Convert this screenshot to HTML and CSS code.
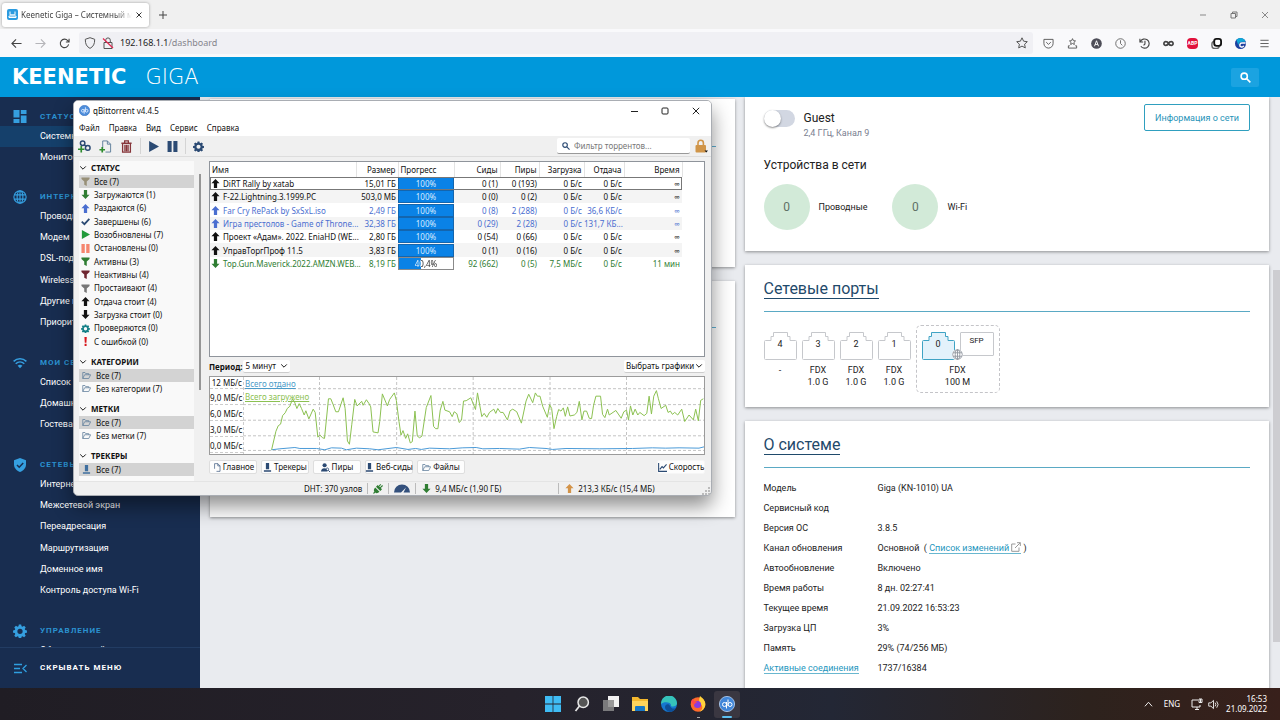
FILE: index.html
```html
<!DOCTYPE html>
<html lang="ru">
<head>
<meta charset="utf-8">
<title>Keenetic Giga – Системный монитор</title>
<link rel="stylesheet" href="styles.css">
</head>
<body>
<svg class="sprite" aria-hidden="true">
  <symbol id="up" viewBox="0 0 10 10"><path d="M5 0 9.500 4.800H6.800V10H3.200V4.800H.5z"/></symbol>
  <symbol id="down" viewBox="0 0 10 10"><path d="M5 10 .5 5.200h2.700V0h3.600v5.200h2.700z"/></symbol>
  <symbol id="funnel" viewBox="0 0 10 10"><path d="M.5.5h9v1.600L6.400 5v5L3.600 8.500V5L.5 2.100z"/></symbol>
  <symbol id="tick" viewBox="0 0 10 10"><path d="M.8 5.200 3.800 8 9.300 2" fill="none" stroke="currentColor" stroke-width="2"/></symbol>
  <symbol id="play" viewBox="0 0 10 10"><path d="M1 0l9 5-9 5z"/></symbol>
  <symbol id="pause" viewBox="0 0 10 10"><path d="M.5 0h3.700v10H.5zM5.800 0h3.700v10H5.800z"/></symbol>
  <symbol id="gear" viewBox="0 0 24 24"><path fill-rule="evenodd" d="M10 1h4l.6 3 1.700.8 2.700-1.700 2.800 2.800-1.700 2.700.8 1.800 3 .6v4l-3 .6-.8 1.700 1.700 2.700-2.800 2.800-2.700-1.700-1.700.8-.6 3h-4l-.6-3-1.700-.8-2.700 1.700-2.800-2.800 1.700-2.700-.8-1.700-3-.6v-4l3-.6.8-1.800L2.200 5.900 5 3.100l2.700 1.700L9.400 4zM12 8a4.500 4.500 0 1 0 0 9 4.500 4.500 0 0 0 0-9z"/></symbol>
  <symbol id="bang" viewBox="0 0 10 10"><path d="M3.800 0h2.600L6 6.500H4.200zM4 7.600h2.200V10H4z"/></symbol>
  <symbol id="folder" viewBox="0 0 12 10"><path d="M1 9V1h3l1 1.500h4V4M1 9l2.500-5H11.500L9 9z" fill="none" stroke="currentColor"/></symbol>
  <symbol id="tracker" viewBox="0 0 10 10"><path d="M3.200 0h3.600v7H3.200zM1 8h8v1.600H1z"/></symbol>
  <symbol id="chev" viewBox="0 0 10 10"><path d="M1.500 3 5 6.500 8.500 3" fill="none" stroke="currentColor" stroke-width="1.200"/></symbol>
  <symbol id="search" viewBox="0 0 12 12"><g fill="none" stroke="currentColor" stroke-width="1.700"><circle cx="4.600" cy="4.600" r="3.400"/><path d="M7.200 7.200 11.300 11.300"/></g></symbol>
  <symbol id="globe" viewBox="0 0 16 16"><g fill="none" stroke="currentColor" stroke-width="1.300"><circle cx="8" cy="8" r="7"/><ellipse cx="8" cy="8" rx="3.300" ry="7"/><path d="M1.500 5.500h13M1.500 10.500h13M8 1v14"/></g></symbol>
  <symbol id="page" viewBox="0 0 14 14"><path d="M4 9V1h5l3.500 3.500V13H7M9 1v3.500h3.500" fill="none" stroke="currentColor"/></symbol>
  <symbol id="port" viewBox="0 0 33 28"><path d="M1.500 8.500H7V4.500H9.500V.5H23.500V4.500H26V8.500H31.500Q32.500 8.500 32.500 9.500V26.500Q32.500 27.500 31.500 27.500H1.500Q.5 27.500.5 26.500V9.500Q.5 8.500 1.500 8.500z"/></symbol>
</svg>

<header class="tabs">
  <div class="tab">
    <svg class="i11" viewBox="0 0 11 11"><rect width="11" height="11" rx="2" fill="#2b9be0"/><path d="M3 2.500v3.300h5V2.500M2 7v1.500h7V7z" fill="none" stroke="#fff"/></svg>
    <span class="tab-title">Keenetic Giga – Системный монитор</span>
    <button class="plain" aria-label="Закрыть вкладку"><svg class="i8" viewBox="0 0 8 8"><path d="M1.500 1.500l5 5m0-5-5 5" stroke="#333"/></svg></button>
  </div>
  <button class="plain newtab" aria-label="Новая вкладка"><svg class="i8" viewBox="0 0 8 8"><path d="M4 0v8M0 4h8" stroke="#444"/></svg></button>
  <div class="winctl ff-ctl">
    <button class="plain" aria-label="Свернуть"><svg class="i8" viewBox="0 0 8 8"><path d="M1 4h6" stroke="#888"/></svg></button>
    <button class="plain" aria-label="Восстановить"><svg class="i8" viewBox="0 0 8 8"><path d="M1 2.500h4.500V7H1zM2.500 2.500V1H7v4.500H5.500" fill="none" stroke="#777"/></svg></button>
    <button class="plain" aria-label="Закрыть"><svg class="i8" viewBox="0 0 8 8"><path d="M1 1l6 6m0-6L1 7" stroke="#888"/></svg></button>
  </div>
</header>

<nav class="urlbar">
  <div class="navbtns">
    <button class="plain" aria-label="Назад"><svg class="i11" viewBox="0 0 12 12"><path d="M11.500 6H1.500M5.500 1.500 1 6l4.500 4.500" fill="none" stroke="#444" stroke-width="1.200"/></svg></button>
    <button class="plain" aria-label="Вперёд"><svg class="i11" viewBox="0 0 12 12"><path d="M.5 6h10M6.500 1.500 11 6l-4.500 4.500" fill="none" stroke="#b5b5b9" stroke-width="1.200"/></svg></button>
    <button class="plain" aria-label="Обновить"><svg class="i11" viewBox="0 0 12 12"><path d="M10.500 7a4.600 4.600 0 1 1-1-4.200L11 4.300M11 .8v3.500H7.500" fill="none" stroke="#444" stroke-width="1.200"/></svg></button>
  </div>
  <div class="address">
    <svg class="i12" viewBox="0 0 12 12"><path d="M6 .7 10.700 2.300C10.700 7 9.500 9.500 6 11.400 2.500 9.500 1.300 7 1.300 2.300z" fill="none" stroke="#555"/></svg>
    <svg class="i12" viewBox="0 0 12 12"><path d="M2 5.500h8v6H2zM3.700 5.500V3.200a2.300 2.300 0 0 1 4.600 0v2.300" fill="none" stroke="#555"/><path d="M1 1.500 11 11" stroke="#e22850" stroke-width="1.200"/></svg>
    <span class="url">192.168.1.1<span>/dashboard</span></span>
    <button class="plain" aria-label="Закладка"><svg class="i12" viewBox="0 0 12 12"><path d="M6 .8l1.600 3.400 3.700.5-2.700 2.500.7 3.700L6 9.100l-3.300 1.800.7-3.700L.7 4.700l3.700-.5z" fill="none" stroke="#555"/></svg></button>
  </div>
  <div class="exts">
    <svg class="i11" viewBox="0 0 12 12"><path d="M1 1.500h10V6a5 5 0 0 1-10 0zM3.500 4.500 6 7l2.500-2.500" fill="none" stroke="#555"/></svg>
    <svg class="i11" viewBox="0 0 12 12"><path d="M6 .7l1 2.200 2.300.3-1.700 1.600.4 2.300L6 6 4 7.100l.4-2.300-1.700-1.600L5 2.900zM3 8.500H1.500v2.500h9V8.500H9" fill="none" stroke="#555"/></svg>
    <svg class="i11" viewBox="0 0 12 12"><circle cx="6" cy="6" r="5.800" fill="#4d4d57"/><path d="M3.800 9 6 3l2.200 6M4.500 7h3" fill="none" stroke="#fff"/></svg>
    <svg class="i11" viewBox="0 0 12 12"><circle cx="6" cy="6" r="5.200" fill="none" stroke="#666"/><path d="M6 2.500V6l2 2" fill="none" stroke="#666"/></svg>
    <svg class="i11" viewBox="0 0 12 12"><path d="M1.500 4A5 5 0 1 1 2 9M1 .8V4.300h3.600M6.500 3v3.500L5 8" fill="none" stroke="#444" stroke-width="1.200"/></svg>
    <svg class="i11" viewBox="0 0 12 12"><path d="M6 6C4.700 3.500 1 3.300 1 6s3.700 2.500 5 0 5-2.700 5 0-3.700 2.500-5 0z" fill="none" stroke="#444" stroke-width="1.900"/></svg>
    <span class="abp">ABP</span>
    <svg class="i11" viewBox="0 0 12 12"><rect x="1" y="3.500" width="8" height="8" rx="3" fill="none" stroke="#666" stroke-width="1.500"/><rect x="3.500" y="1" width="7.500" height="7.500" rx="2.500" fill="#fff" stroke="#111" stroke-width="2"/></svg>
    <svg class="i11" viewBox="0 0 12 12"><circle cx="6" cy="6" r="6" fill="#1d3f9e"/><path d="M6 0a6 6 0 0 0-4.500 2L4 9C3 6 5 4 8 4h3.500A6 6 0 0 0 6 0z" fill="#0fa8d8"/><path d="M11.500 5.500H7.500a2.200 2.200 0 1 0 2 3" fill="none" stroke="#fff" stroke-width="1.600"/></svg>
    <button class="plain" aria-label="Меню"><svg class="i11" viewBox="0 0 12 12"><path d="M1.500 2.500h9M1.500 6h9M1.500 9.500h9" stroke="#555"/></svg></button>
  </div>
</nav>

<header class="brand">
  <div class="logo"><b>KEENETIC</b><span>GIGA</span></div>
  <button class="hsearch" aria-label="Поиск"><svg class="i11"><use href="#search"/></svg></button>
</header>

<div class="stage">
  <aside class="side">
    <div class="side-scroll">
      <section>
        <h2><svg class="i13" viewBox="0 0 13 13"><path d="M0 0h6v7.500H0zM0 9h6v4H0zM7.300 0H13v4H7.300zM7.300 5.500H13V13H7.300z"/></svg>СТАТУС</h2>
        <ul><li class="on"><a href="#">Системный монитор</a></li><li><a href="#">Монитор трафика</a></li></ul>
      </section>
      <section>
        <h2><svg class="i14"><use href="#globe"/></svg>ИНТЕРНЕТ</h2>
        <ul><li><a href="#">Проводной</a></li><li><a href="#">Модем</a></li><li><a href="#">DSL-подключение</a></li><li><a href="#">Wireless ISP</a></li><li><a href="#">Другие подключения</a></li><li><a href="#">Приоритеты</a></li></ul>
      </section>
      <section>
        <h2><svg class="i14" viewBox="0 0 14 14"><g fill="none" stroke="currentColor" stroke-width="1.500"><path d="M.6 5.400c3.700-3.500 9.100-3.500 12.800 0M2.700 7.800c2.500-2.300 6.100-2.300 8.600 0"/></g><path d="M4.600 9.800q2.400-2 4.800 0L7 12.300z"/></svg>МОИ СЕТИ И WI-FI</h2>
        <ul><li><a href="#">Список устройств</a></li><li><a href="#">Домашняя сеть</a></li><li><a href="#">Гостевая сеть</a></li></ul>
      </section>
      <section>
        <h2><svg class="i14" viewBox="0 0 14 14"><path d="M7 0l6 2.300v4.200c0 3.500-2.500 6.300-6 7.500-3.500-1.200-6-4-6-7.500V2.300z"/><path d="M4 7l2.200 2.200L10.200 5" fill="none" stroke="#182d50" stroke-width="1.500"/></svg>СЕТЕВЫЕ ПРАВИЛА</h2>
        <ul><li><a href="#">Интернет-фильтр</a></li><li><a href="#">Межсетевой экран</a></li><li><a href="#">Переадресация</a></li><li><a href="#">Маршрутизация</a></li><li><a href="#">Доменное имя</a></li><li><a href="#">Контроль доступа Wi-Fi</a></li></ul>
      </section>
      <section>
        <h2><svg class="i14"><use href="#gear"/></svg>УПРАВЛЕНИЕ</h2>
        <ul><li><a href="#">Общие настройки</a></li></ul>
      </section>
    </div>
    <button class="collapse"><svg class="i13" viewBox="0 0 13 13"><path d="M0 2.500h8M0 6.500h6M0 10.500h8M12.500 3 9 6.500l3.500 3.500" fill="none" stroke="#2f9fe0" stroke-width="1.300"/></svg>СКРЫВАТЬ МЕНЮ</button>
  </aside>

  <main class="cards">
    <div class="col col-left">
      <section class="card c1"><div class="rule"></div></section>
      <section class="card c2"><div class="rule"></div></section>
    </div>
    <div class="col">
      <section class="card net">
        <div class="guest">
          <input type="checkbox" id="guest" class="switch">
          <label for="guest"><strong>Guest</strong><small>2,4 ГГц, Канал 9</small></label>
          <button class="outline">Информация о сети</button>
        </div>
        <h3>Устройства в сети</h3>
        <div class="counts"><div><span class="dot">0</span>Проводные</div><div><span class="dot">0</span>Wi-Fi</div></div>
      </section>
      <section class="card ports-card">
        <h2 class="title"><a href="#">Сетевые порты</a></h2>
        <div class="ports">
          <div class="port"><div class="jack"><svg><use href="#port"/></svg><span>4</span></div><p>-</p></div>
          <div class="port"><div class="jack"><svg><use href="#port"/></svg><span>3</span></div><p>FDX<br>1.0 G</p></div>
          <div class="port"><div class="jack"><svg><use href="#port"/></svg><span>2</span></div><p>FDX<br>1.0 G</p></div>
          <div class="port"><div class="jack"><svg><use href="#port"/></svg><span>1</span></div><p>FDX<br>1.0 G</p></div>
          <div class="port wan"><div class="pair"><div class="jack live"><svg><use href="#port"/></svg><span>0</span></div><div class="sfp">SFP</div><svg class="wan-globe"><use href="#globe"/></svg></div><p>FDX<br>100 M</p></div>
        </div>
      </section>
      <section class="card sys">
        <h2 class="title"><a href="#">О системе</a></h2>
        <dl>
          <dt>Модель</dt><dd>Giga (KN-1010) UA</dd>
          <dt>Сервисный код</dt><dd></dd>
          <dt>Версия ОС</dt><dd>3.8.5</dd>
          <dt>Канал обновления</dt><dd>Основной &nbsp;( <a href="#">Список изменений <svg class="i10" viewBox="0 0 10 10"><path d="M4.500 2H.7v7.300H8V5.500M4 6l5.300-5.300M6 .7h3.300V4" fill="none" stroke="#999"/></svg></a> )</dd>
          <dt>Автообновление</dt><dd>Включено</dd>
          <dt>Время работы</dt><dd>8 дн. 02:27:41</dd>
          <dt>Текущее время</dt><dd>21.09.2022 16:53:23</dd>
          <dt>Загрузка ЦП</dt><dd>3%</dd>
          <dt>Память</dt><dd>29% (74/256 МБ)</dd>
          <dt><a href="#">Активные соединения</a></dt><dd>1737/16384</dd>
        </dl>
      </section>
    </div>
  </main>
  <div class="thumb"></div>
</div>

<div class="qb">
  <div class="qb-title">
    <svg class="i11" viewBox="0 0 12 12"><circle cx="6" cy="6" r="5.700" fill="#4e8edb" stroke="#356ebf" stroke-width=".6"/><g fill="none" stroke="#dceaff"><circle cx="4.200" cy="6.300" r="1.500"/><path d="M5.700 4.500v5M7 2.500v5"/><circle cx="8.300" cy="6.300" r="1.500"/></g></svg>
    <span>qBittorrent v4.4.5</span>
    <div class="winctl">
      <button class="plain" aria-label="Свернуть"><svg class="i8" viewBox="0 0 8 8"><path d="M1 4.500h7" stroke="#222"/></svg></button>
      <button class="plain" aria-label="Развернуть"><svg class="i8" viewBox="0 0 8 8"><rect x="1" y="1" width="6" height="6" rx="1" fill="none" stroke="#222"/></svg></button>
      <button class="plain" aria-label="Закрыть"><svg class="i8" viewBox="0 0 8 8"><path d="M.8.8l6.400 6.400m0-6.400L.8 7.200" stroke="#222"/></svg></button>
    </div>
  </div>
  <div class="qb-menu"><button class="plain">Файл</button><button class="plain">Правка</button><button class="plain">Вид</button><button class="plain">Сервис</button><button class="plain">Справка</button></div>
  <div class="qb-tools">
    <button class="plain" aria-label="Добавить ссылку"><svg class="i13" viewBox="0 0 14 14"><g fill="none" stroke="#2b4a73" stroke-width="1.600"><circle cx="5" cy="3.500" r="2.400"/><circle cx="10.500" cy="8.500" r="2.500"/><path d="M6.500 5l2.500 2"/></g><path d="M3.500 6.500v7M0 10h7" stroke="#2e8b2e" stroke-width="1.800"/></svg></button>
    <button class="plain" aria-label="Добавить торрент"><svg class="i13 slate" viewBox="0 0 14 14"><use href="#page"/><path d="M3.500 7.500v6M.5 10.500h6" stroke="#2e8b2e" stroke-width="1.800"/></svg></button>
    <button class="plain" aria-label="Удалить"><svg class="i13" viewBox="0 0 14 14"><path d="M1.500 3.500h11M5 3V1h4v2M2.800 4v9h8.400V4M5.300 5v7M7 5v7M8.700 5v7" fill="none" stroke="#86353a" stroke-width="1.400"/></svg></button>
    <i class="sep"></i>
    <button class="plain navy" aria-label="Запустить"><svg class="i11"><use href="#play"/></svg></button>
    <button class="plain navy" aria-label="Остановить"><svg class="i11"><use href="#pause"/></svg></button>
    <i class="sep"></i>
    <button class="plain navy" aria-label="Настройки"><svg class="i11"><use href="#gear"/></svg></button>
    <label class="filter"><svg class="i8 navy"><use href="#search"/></svg><input type="text" placeholder="Фильтр торрентов..." aria-label="Фильтр торрентов"></label>
    <button class="plain lock" aria-label="Блокировка"><svg class="i14" viewBox="0 0 14 14"><path d="M4 6.500V4a2.700 2.700 0 0 1 5.400 0v2.500" fill="none" stroke="#d09549" stroke-width="1.600"/><rect x="1.500" y="6" width="10.500" height="7.500" rx="1" fill="#d09549"/><path d="M10.500 11.500H14l-1.700 2z" fill="#111"/></svg></button>
  </div>
  <div class="qb-body">
    <div class="filters">
      <h4><svg class="i8"><use href="#chev"/></svg>СТАТУС</h4>
      <ul>
        <li class="sel"><svg class="i9 tan"><use href="#funnel"/></svg>Все (7)</li>
        <li><svg class="i9 green"><use href="#down"/></svg>Загружаются (1)</li>
        <li><svg class="i9 blue"><use href="#up"/></svg>Раздаются (6)</li>
        <li><svg class="i9 navy"><use href="#tick"/></svg>Завершены (6)</li>
        <li><svg class="i9 lime"><use href="#play"/></svg>Возобновлены (7)</li>
        <li><svg class="i9 salmon"><use href="#pause"/></svg>Остановлены (0)</li>
        <li><svg class="i9 green"><use href="#funnel"/></svg>Активны (3)</li>
        <li><svg class="i9 wine"><use href="#funnel"/></svg>Неактивны (4)</li>
        <li><svg class="i9 gray"><use href="#funnel"/></svg>Простаивают (4)</li>
        <li><svg class="i9"><use href="#up"/></svg>Отдача стоит (4)</li>
        <li><svg class="i9"><use href="#down"/></svg>Загрузка стоит (0)</li>
        <li><svg class="i9 teal"><use href="#gear"/></svg>Проверяются (0)</li>
        <li><svg class="i9 red"><use href="#bang"/></svg>С ошибкой (0)</li>
      </ul>
      <h4><svg class="i8"><use href="#chev"/></svg>КАТЕГОРИИ</h4>
      <ul class="wide"><li class="sel"><svg class="i9 slate"><use href="#folder"/></svg>Все (7)</li><li><svg class="i9 slate"><use href="#folder"/></svg>Без категории (7)</li></ul>
      <h4><svg class="i8"><use href="#chev"/></svg>МЕТКИ</h4>
      <ul class="wide"><li class="sel"><svg class="i9 slate"><use href="#folder"/></svg>Все (7)</li><li><svg class="i9 slate"><use href="#folder"/></svg>Без метки (7)</li></ul>
      <h4><svg class="i8"><use href="#chev"/></svg>ТРЕКЕРЫ</h4>
      <ul class="wide"><li class="sel"><svg class="i9 steel"><use href="#tracker"/></svg>Все (7)</li></ul>
    </div>
    <div class="fscroll"></div>
    <div class="pane">
      <div class="list">
        <table>
          <colgroup><col class="w-name"><col class="w-size"><col class="w-prog"><col class="w-seed"><col class="w-peer"><col class="w-down"><col class="w-up"><col class="w-time"></colgroup>
          <thead><tr><th>Имя</th><th>Размер</th><th>Прогресс</th><th>Сиды</th><th>Пиры</th><th>Загрузка</th><th>Отдача</th><th>Время</th></tr></thead>
          <tbody>
            <tr class="cur"><td><svg class="i9"><use href="#up"/></svg>DiRT Rally by xatab</td><td>15,01 ГБ</td><td><div class="bar"><span class="pct full">100%</span></div></td><td>0 (1)</td><td>0 (193)</td><td>0 Б/с</td><td>0 Б/с</td><td>∞</td></tr>
            <tr><td><svg class="i9"><use href="#up"/></svg>F-22.Lightning.3.1999.PC</td><td>503,0 МБ</td><td><div class="bar"><span class="pct full">100%</span></div></td><td>0 (0)</td><td>0 (2)</td><td>0 Б/с</td><td>0 Б/с</td><td>∞</td></tr>
            <tr class="blue"><td><svg class="i9"><use href="#up"/></svg>Far Cry RePack by SxSxL.iso</td><td>2,49 ГБ</td><td><div class="bar"><span class="pct full">100%</span></div></td><td>0 (8)</td><td>2 (288)</td><td>0 Б/с</td><td>36,6 КБ/с</td><td>∞</td></tr>
            <tr class="blue"><td><svg class="i9"><use href="#up"/></svg>Игра престолов - Game of Throne...</td><td>32,38 ГБ</td><td><div class="bar"><span class="pct full">100%</span></div></td><td>0 (29)</td><td>2 (28)</td><td>0 Б/с</td><td>131,7 КБ...</td><td>∞</td></tr>
            <tr><td><svg class="i9"><use href="#up"/></svg>Проект «Адам». 2022. EniaHD (WE...</td><td>2,80 ГБ</td><td><div class="bar"><span class="pct full">100%</span></div></td><td>0 (54)</td><td>0 (66)</td><td>0 Б/с</td><td>0 Б/с</td><td>∞</td></tr>
            <tr><td><svg class="i9"><use href="#up"/></svg>УправТоргПроф 11.5</td><td>3,83 ГБ</td><td><div class="bar"><span class="pct full">100%</span></div></td><td>0 (1)</td><td>0 (16)</td><td>0 Б/с</td><td>0 Б/с</td><td>∞</td></tr>
            <tr class="green"><td><svg class="i9"><use href="#down"/></svg>Top.Gun.Maverick.2022.AMZN.WEB...</td><td>8,19 ГБ</td><td><div class="bar part"><span class="pct split">40,4%</span></div></td><td>92 (662)</td><td>0 (5)</td><td>7,5 МБ/с</td><td>0 Б/с</td><td>11 мин</td></tr>
          </tbody>
        </table>
      </div>
      <div class="period">
        <label for="per">Период:</label>
        <span class="pick"><select id="per"><option>5 минут</option></select><svg class="i8"><use href="#chev"/></svg></span>
        <span class="pick right"><select aria-label="Выбрать графики"><option>Выбрать графики</option></select><svg class="i8"><use href="#chev"/></svg></span>
      </div>
      <div class="graph">
        <div class="axis"><span>12 МБ/с</span><span>9,0 МБ/с</span><span>6,0 МБ/с</span><span>3,0 МБ/с</span><span>0,0 МБ/с</span></div>
        <svg class="plot" viewBox="129 63 1386 237" preserveAspectRatio="none">
          <path class="gridline" d="M129 99H1515M129 148H1515M129 196H1515M129 244H1515M129 289H1515M130 63V300M359 63V300M591 63V300M821 63V300M1052 63V300M1282 63V300"/>
          <polyline class="up-line" points="215,287 240,284 285,280 300,283 350,283 375,287 395,281 425,282 440,287 470,282 510,284 535,287 590,280 625,286 648,283 665,286 690,282 750,284 790,281 830,280 850,284 900,283 960,285 990,280 1040,283 1060,286 1100,283 1200,284 1300,283 1360,281 1400,282 1440,281 1500,282 1515,278"/>
          <polyline class="down-line" points="215,287 228,230 235,213 242,208 248,182 256,173 262,160 270,153 278,130 284,140 291,160 298,145 305,160 313,180 318,167 327,192 340,162 346,172 354,248 361,242 368,250 374,252 386,130 393,130 400,148 408,170 416,170 430,127 436,160 443,260 449,270 456,210 465,132 472,152 486,138 490,150 500,133 508,145 513,155 520,232 535,235 540,200 548,115 563,152 570,132 584,112 590,135 598,200 604,242 610,228 618,252 624,238 632,266 638,262 646,168 653,245 660,250 667,245 680,157 694,120 702,215 708,222 715,222 722,165 730,138 736,165 750,170 758,185 764,170 772,176 779,203 786,196 792,137 800,136 814,127 828,163 834,112 847,185"/>
          <polyline class="down-line" transform="translate(780 0)" points="67,185 74,175 82,187 90,172 103,162 109,175 115,160 123,172 131,172 144,195 152,167 160,162 172,170 186,205 200,137 208,116 220,142 228,112 234,122 242,122 250,153 264,187 271,148 277,160 284,222 292,185 298,163 305,168 312,158 318,184 325,155 332,183 345,180 353,172 360,138 368,195 374,168 382,168 390,190 397,191 403,150 410,122 424,122 430,178 437,188 445,162 450,180 470,166 486,190 494,170 502,165 508,195 514,152 521,180 528,162 536,180 542,172 555,182 563,175 570,122 577,177 584,122 592,105 598,130 606,160 620,150 627,172 634,168 640,178 647,172 656,180 668,162 677,200 690,180 703,195 710,162 718,198 725,135 733,130"/>
        </svg>
        <div class="legend"><a href="#" class="l-up">Всего отдано</a><a href="#" class="l-down">Всего загружено</a></div>
      </div>
      <div class="dtabs">
        <button><svg class="i9 navy"><use href="#page"/></svg>Главное</button>
        <button><svg class="i9 navy"><use href="#tracker"/></svg>Трекеры</button>
        <button><svg class="i9 navy" viewBox="0 0 10 10"><circle cx="4" cy="2.500" r="2.300"/><path d="M0 9.500C0 4.500 7 4.500 7 9.500z"/><path d="M7 5.500a1.500 1.500 0 1 1-.1 0M8 8l2 2" fill="none" stroke="currentColor"/></svg>Пиры</button>
        <button><svg class="i9 navy"><use href="#tracker"/></svg>Веб-сиды</button>
        <button><svg class="i9 slate"><use href="#folder"/></svg>Файлы</button>
        <button class="speed"><svg class="i9 navy" viewBox="0 0 10 10"><path d="M.7 0v9.300H10M2 7l2.500-3L6 5.500 9.500 1.500" fill="none" stroke="currentColor" stroke-width="1.200"/></svg>Скорость</button>
      </div>
    </div>
  </div>
  <footer class="qb-status">
    <span class="dht">DHT: 370 узлов</span>
    <span class="cell"><svg class="i10 green" viewBox="0 0 10 10"><path d="M2.200 3.500 6.500 7.800C5 9.400 3.200 9.400 2.200 8.600L.9 9.900l-.8-.8L1.400 7.800C.6 6.800.6 5 2.200 3.500zM3 2.700l4.300 4.300L9 5.300 7.800 4.100 10 1.900 9.200 1.100 7 3.300 6.300 2.600 8.200.8 7.400 0 5.500 1.900 4.700 1.100z"/></svg></span>
    <span class="cell"><svg class="gauge" viewBox="0 0 16 9"><path d="M0 8.500a8 8 0 0 1 16 0H9.500L12 3.500 7 8.500z" fill="#33507c"/></svg></span>
    <span class="cell down-cell"><svg class="i9 green"><use href="#down"/></svg>9,4 МБ/с (1,90 ГБ)</span>
    <span class="cell up-cell"><svg class="i9 orange"><use href="#up"/></svg>213,3 КБ/с (15,4 МБ)</span>
    <span class="grip"><svg class="i8" viewBox="0 0 8 8"><path d="M6 0h2v2H6zM3 3h2v2H3zM6 3h2v2H6zM0 6h2v2H0zM3 6h2v2H3zM6 6h2v2H6z" fill="#bbb"/></svg></span>
  </footer>
</div>

<footer class="taskbar">
  <div class="apps">
    <button class="plain" aria-label="Пуск"><svg class="i16" viewBox="0 0 16 16"><path d="M0 0h7.600v7.600H0zM8.400 0H16v7.600H8.400zM0 8.400h7.600V16H0zM8.400 8.400H16V16H8.400z" fill="#3fbcf4"/></svg></button>
    <button class="plain" aria-label="Поиск"><svg class="i16" viewBox="0 0 16 16"><circle cx="9.200" cy="6.300" r="5.200" fill="#555" stroke="#e8e8e8" stroke-width="1.500"/><path d="M5.500 10 1.500 15" stroke="#e8e8e8" stroke-width="1.700"/></svg></button>
    <button class="plain" aria-label="Представление задач"><svg class="i16" viewBox="0 0 16 16"><path d="M5 0h11v11H5z" fill="#f2f2f2"/><path d="M0 4h11v11H0z" fill="#8a8a8a" opacity=".85"/></svg></button>
    <button class="plain" aria-label="Проводник"><svg class="i16" viewBox="0 0 16 16"><path d="M0 1h6l2 2h8v12H0z" fill="#f4b82e"/><path d="M0 5h16v10H0z" fill="#ffd45c"/><path d="M3 15v-4q0-1 1-1h8q1 0 1 1v4z" fill="#1878c6"/></svg></button>
    <button class="plain" aria-label="Edge"><svg class="i16" viewBox="0 0 16 16"><circle cx="8" cy="8" r="8" fill="#1677cf"/><path d="M0 8a8 8 0 0 1 16-1c.3 3-4 4.500-6 3 1-4-7-5-10-2z" fill="#36c3ba"/><path d="M9 10c-1-3-5-2-5 1 0 3 3 4.500 5 4.900 3-.1 5-2 6-3.900-3 1.500-5 0-6-2z" fill="#0d4f99"/></svg></button>
    <button class="plain run" aria-label="Firefox"><svg class="i16" viewBox="0 0 16 16"><circle cx="8" cy="8.500" r="7.300" fill="#ff6a2a"/><path d="M10 0c4 3 6 6 5.200 10-1 3-3 5-6 5.800 5-3 3-7 1-8C8.500 6 9 3 10 0z" fill="#ffd23c"/><circle cx="7.500" cy="8.500" r="3.600" fill="#8a3be0"/><path d="M1 5.500C1.500 4 2.500 3 3.500 2.500L4 5l3.500 1C6 7 5 7 5 8.500c-1.500 0-3-1-4-3z" fill="#ff4a4a"/></svg></button>
    <button class="plain run active" aria-label="qBittorrent"><svg class="i16" viewBox="0 0 16 16"><circle cx="8" cy="8" r="7.600" fill="#4186d8" stroke="#b9d3f5" stroke-width=".8"/><g fill="none" stroke="#fff"><circle cx="5.500" cy="8.500" r="2"/><path d="M7.500 6v6.500M9 3.500V10"/><circle cx="11" cy="8.500" r="2"/></g></svg></button>
  </div>
  <div class="tray">
    <svg class="i9" viewBox="0 0 10 10"><path d="M1 7l4-4.500L9 7" fill="none" stroke="#fff"/></svg>
    <span class="lang">ENG</span>
    <svg class="i12" viewBox="0 0 12 12"><path d="M7 2H1v7h8V7M4 11.500h4M6 9v2.500M9.500 1v3M8 1h3v3.500H8z" fill="none" stroke="#eee"/></svg>
    <svg class="i11" viewBox="0 0 12 12"><path d="M.8 4.200h2.400L6 1.500v9L3.200 7.800H.8zM7.800 4q1.500 2 0 4M9.500 2.500q3 3.500 0 7" fill="none" stroke="#eee"/></svg>
    <time>16:53<br>21.09.2022</time>
  </div>
</footer>
</body>
</html>
```
FILE: styles.css
```css
* { box-sizing: border-box; }
body { margin: 0; height: 100vh; display: flex; flex-direction: column; overflow: hidden; position: relative; font: 9px/12px Roboto, "Liberation Sans", sans-serif; color: #222; background: #e9ebef; }
h2, h3, h4, ul, p, dl, dd { margin: 0; padding: 0; }
ul { list-style: none; }
svg { display: block; flex: none; fill: currentColor; }
.sprite { position: absolute; width: 0; height: 0; }
.plain { border: 0; background: none; padding: 0; font: inherit; color: inherit; display: flex; align-items: center; }
.i8 { width: 8px; height: 8px; }
.i9 { width: 9px; height: 9px; }
.i10 { width: 10px; height: 10px; }
.i11 { width: 11px; height: 11px; }
.i12 { width: 12px; height: 12px; }
.i13 { width: 13px; height: 13px; }
.i14 { width: 14px; height: 14px; }
.i16 { width: 16px; height: 16px; }
.navy { color: #2b4a73; }
.slate { color: #5d7c99; }
.steel { color: #3f6f9f; }
.tan { color: #989078; }
.green { color: #2f7d32; }
.lime { color: #219a3a; }
.blue { color: #4a6ed0; }
.salmon { color: #f5866f; }
.wine { color: #6e2630; }
.gray { color: #777; }
.teal { color: #137f86; }
.red { color: #d8161c; }
.orange { color: #d39348; }

/* Browser */
.tabs { display: flex; align-items: center; height: 29px; background: #f0f0f0; font-family: "Noto Sans", sans-serif; font-size: 8px; flex: none; }
.tab { display: flex; align-items: center; gap: 3px; width: 147px; height: 24px; margin-left: 2px; padding: 0 6px 0 5px; background: #fff; border-radius: 3px; box-shadow: 0 0 3px rgba(0,0,0,.35); color: #444; }
.tab-title { flex: 1; overflow: hidden; white-space: nowrap; -webkit-mask-image: linear-gradient(90deg, #000 85%, transparent); mask-image: linear-gradient(90deg, #000 85%, transparent); }
.newtab { margin-left: 10px; }
.winctl { margin-left: auto; display: flex; align-items: center; gap: 23px; }
.ff-ctl { padding-right: 11px; }
.urlbar { display: flex; align-items: center; height: 28px; flex: none; background: #f9f9fb; }
.navbtns { display: flex; gap: 13px; padding: 0 9px 0 11px; }
.address { flex: 1; display: flex; align-items: center; gap: 6px; height: 22px; padding: 0 5px; background: #f0f0f4; border-radius: 3px; }
.url { flex: 1; font: 9px/12px "Noto Sans", sans-serif; color: #222; }
.url span { color: #85858c; }
.exts { display: flex; align-items: center; gap: 13px; padding: 0 10px; }
.abp { width: 11px; height: 11px; border-radius: 4px; background: #e1123c; color: #fff; font-size: 5px; line-height: 11px; font-weight: 700; text-align: center; }

/* Router header */
.brand { display: flex; align-items: center; justify-content: space-between; height: 40px; flex: none; padding: 0 21px 0 12px; background: #0098db; color: #fff; }
.logo { display: flex; align-items: center; gap: 19px; font: 21px/24px "DejaVu Sans", sans-serif; }
.logo span { font-weight: 200; }
.hsearch { width: 28px; height: 19px; border: 0; border-radius: 2px; background: #1ba3e1; color: #fff; padding: 0; display: grid; place-items: center; }

/* Router page */
.stage { flex: 1; min-height: 0; display: flex; position: relative; overflow: hidden; }
.side { width: 200px; flex: none; display: flex; flex-direction: column; background: #182d50; color: #fff; }
.side-scroll { flex: 1; min-height: 0; overflow: hidden; padding-top: 10px; display: flex; flex-direction: column; gap: 19px; }
.side h2 { display: flex; align-items: center; gap: 13px; height: 19px; padding-left: 13px; font-size: 8px; letter-spacing: 1px; color: #2b92d0; white-space: nowrap; }
.side h2 svg { color: #359fe0; width: 14px; }
.side li { height: 21px; line-height: 20px; padding-left: 40px; }
.side li:nth-child(3n) { height: 22px; }
.side li.on { background: #15406b; }
.side a { color: #fff; text-decoration: none; }
.collapse { display: flex; align-items: center; gap: 13px; height: 41px; flex: none; padding: 0 14px; border: 0; border-top: 1px solid #223c63; background: #182d50; color: #fff; font: 700 8px/12px Roboto, sans-serif; letter-spacing: 1px; }
.cards { flex: 1; display: grid; grid-template-columns: 1fr 1fr; gap: 10px; padding: 0 11px 0 10px; }
.col { display: flex; flex-direction: column; gap: 14px; }
.col-left { padding-top: 2px; }
.card { background: #fff; box-shadow: 0 1px 3px rgba(0,0,0,.4); padding: 0 19px; flex: none; }
.c1 { height: 168px; padding-top: 47px; }
.c2 { height: 236px; padding-top: 46px; }
.rule { border-top: 1px solid #5fb0d4; }
.net { padding-top: 7px; padding-bottom: 21px; }
.guest { display: flex; align-items: flex-start; gap: 9px; }
.switch { appearance: none; width: 31px; height: 17px; margin: 6px 0 0; border-radius: 9px; background: #d2d7e2; display: flex; }
.switch::before { content: ""; width: 17px; height: 17px; border-radius: 9px; background: #fff; box-shadow: 0 1px 2px rgba(0,0,0,.45); }
.guest label { padding-top: 7px; }
.guest strong { display: block; font: 12px/15px Roboto, sans-serif; }
.guest small { display: block; font-size: 9px; line-height: 14px; color: #7a8090; }
.outline { margin-left: auto; padding: 0 10px; height: 27px; border: 1px solid #2f9fbf; border-radius: 2px; background: #fff; color: #1f93b8; font: 9px/12px Roboto, sans-serif; }
h3 { font-size: 12px; line-height: 16px; font-weight: 400; margin: 17px 0 11px; }
.counts { display: flex; gap: 25px; }
.counts div { display: flex; align-items: center; gap: 9px; }
.dot { width: 46px; height: 46px; border-radius: 50%; background: #d2ead8; font-size: 12px; display: grid; place-items: center; color: #5f7066; }
.title { font-size: 16px; line-height: 18px; font-weight: 400; padding: 15px 0 13px; border-bottom: 1px solid #5aa9c4; }
.title a { color: #1f4a6b; text-decoration: none; border-bottom: 1px solid #1f4a6b; }
.ports { display: flex; gap: 5px; padding: 13px 0 14px; text-align: center; }
.port { width: 33px; padding-top: 7px; }
.jack { position: relative; width: 33px; height: 28px; color: #222; }
.jack svg { width: 33px; height: 28px; fill: #fff; stroke: #c6c8cc; }
.jack.live svg { fill: #e3f2fb; stroke: #3fa3c4; }
.jack span { position: absolute; left: 0; right: 0; top: 6px; }
.port p { padding-top: 4px; }
.wan { width: 84px; height: 68px; padding: 6px 5px 0; border: 1px dashed #c4c4c8; border-radius: 5px; }
.pair { display: flex; gap: 5px; position: relative; }
.sfp { width: 34px; height: 24px; border: 1px solid #c6c8cc; border-radius: 1px; font-size: 8px; line-height: 16px; }
.wan-globe { position: absolute; left: 30px; top: 17px; width: 11px; height: 11px; color: #8d939c; background: #fff; border-radius: 50%; }
dl { display: grid; grid-template-columns: 114px 1fr; line-height: 20px; padding: 10px 0 14px; }
dl a { color: #2496bd; text-decoration: none; border-bottom: 1px solid #69b7cf; }
dl a svg { display: inline; vertical-align: -1px; }
.thumb { position: absolute; right: 0; top: 173px; width: 7px; height: 372px; background: #cdcdd1; }

/* qBittorrent window */
.qb { position: absolute; left: 73px; top: 100px; width: 639px; height: 396px; display: flex; flex-direction: column; border: 1px solid #a9adb3; border-radius: 5px; overflow: hidden; background: #f0f0f0; box-shadow: 0 10px 20px rgba(0,0,0,.45); font: 8px/12px "Noto Sans", "Open Sans", sans-serif; color: #111; white-space: nowrap; }
.qb-title { display: flex; align-items: center; gap: 3px; height: 19px; padding: 0 11px 0 5px; background: #fff; flex: none; }
.qb-menu { display: flex; gap: 9px; height: 16px; padding: 0 5px; background: #fff; flex: none; }
.qb-tools { display: flex; align-items: center; height: 21px; flex: none; gap: 8px; padding: 0 3px 0 4px; border-bottom: 1px solid #ddd; }
.qb-tools .sep { margin: 0 -1px; }
.sep { width: 1px; height: 16px; background: #d4d4d4; }
.filter { margin-left: auto; display: flex; align-items: center; gap: 4px; width: 133px; height: 16px; padding-left: 5px; background: #fff; border-bottom: 1px solid #999; border-radius: 2px; }
.filter input { flex: 1; min-width: 0; border: 0; outline: 0; padding: 0; font: inherit; background: none; }
.filter input::placeholder { color: #777; }
.lock { margin-left: -4px; }
.qb-body { flex: 1; min-height: 0; display: flex; padding: 4px 6px 0 5px; }
.filters { width: 115px; background: #f9f9f9; overflow: hidden; }
.filters h4 { display: flex; align-items: center; gap: 4px; height: 14px; font-size: 8px; font-weight: 700; }
.filters li { display: flex; align-items: center; gap: 4px; height: 13px; padding-left: 2px; }
.filters li:nth-child(3n) { height: 14px; }
.filters .wide li { gap: 5px; padding-left: 3px; }
.filters .sel { background: #d3d3d3; }
.filters ul { margin-bottom: 7px; }
.fscroll { width: 2px; height: 216px; margin: 13px 8px 0 5px; background: #969696; }
.pane { flex: 1; min-width: 0; display: flex; flex-direction: column; }
.list { height: 196px; border: 1px solid #8f949b; background: #fff; flex: none; overflow: hidden; }
table { table-layout: fixed; width: 472px; border-collapse: collapse; }
.w-name { width: 146px; } .w-size { width: 42px; } .w-prog { width: 56px; } .w-seed { width: 46px; } .w-peer { width: 39px; } .w-down { width: 45px; } .w-up { width: 40px; } .w-time { width: 58px; }
th { font-weight: 400; height: 15px; padding: 0 2px; border-right: 1px solid #e3e3e3; text-align: right; }
th:first-child, th:nth-child(3) { text-align: left; }
td { height: 13px; padding: 0 2px 0 0; text-align: right; line-height: 13px; }
td:first-child { text-align: left; padding: 0 0 0 1px; }
td:nth-child(3) { padding: 0; }
td svg { display: inline-block; vertical-align: -1px; margin-right: 3px; }
tbody tr:nth-child(3n) td { height: 14px; }
tbody tr:nth-child(even) { background: #f4f4f4; }
.cur { outline: 1px solid #777; outline-offset: -1px; }
.bar { height: 13px; border: 1px solid #1465ad; background: #0a82e6; }
.pct { display: block; text-align: center; line-height: 11px; }
.full { color: #d6ecff; }
.part { border-color: #8a8a8a; background: linear-gradient(90deg, #0a82e6 40%, #fff 40%); }
.split { color: transparent; background: linear-gradient(90deg, #fff 40%, #222 40%); -webkit-background-clip: text; background-clip: text; }
.period { display: flex; align-items: center; height: 19px; gap: 1px; flex: none; }
.period label { font-weight: 700; }
.pick { position: relative; background: #fff; border-bottom: 1px solid #ccc; border-radius: 2px; width: 47px; height: 13px; }
.pick select { appearance: none; width: 100%; border: 0; background: none; padding: 0 2px; font: inherit; color: inherit; display: block; }
.pick svg { position: absolute; right: 2px; top: 2px; }
.pick.right { margin-left: auto; width: 81px; }
.graph { position: relative; display: flex; height: 79px; border: 1px solid #9b9b9b; background: #fff; flex: none; }
.axis { width: 33px; display: flex; flex-direction: column; text-align: right; line-height: 8px; }
.axis span { height: 16px; border-bottom: 1px dashed #ccc; padding: 5px 1px 0 0; }
.axis span:first-child { height: 12px; padding-top: 2px; }
.plot { flex: 1; min-width: 0; height: 100%; }
.plot * { fill: none; vector-effect: non-scaling-stroke; }
.gridline { stroke: #c4c4c4; stroke-dasharray: 3 2; }
.up-line { stroke: #4c9bd8; }
.down-line { stroke: #8cc152; }
.legend { position: absolute; left: 35px; top: 1px; display: flex; flex-direction: column; gap: 1px; }
.l-up { color: #4c9bc8; }
.l-down { color: #8cc152; }
.dtabs { display: flex; gap: 4px; padding-top: 5px; }
.dtabs button { display: flex; align-items: center; justify-content: center; gap: 2px; width: 48px; height: 14px; padding: 0; border: 1px solid #dedede; border-radius: 2px; background: #fdfdfd; font: inherit; color: inherit; }
.dtabs .speed { margin-left: auto; border-color: #f6f6f6; }
.qb-status { display: flex; align-items: center; height: 14px; flex: none; padding-left: 230px; border-top: 1px solid #e4e4e4; }
.dht { padding-right: 5px; }
.cell { display: flex; align-items: center; gap: 4px; height: 11px; padding: 0 5px; border-left: 1px solid #bbb; }
.gauge { width: 16px; height: 9px; }
.down-cell { width: 143px; padding: 0 6px; }
.up-cell { width: 140px; padding: 0 6px; }
.grip { margin-left: auto; padding: 4px 1px 0 0; }

/* Taskbar */
.taskbar { display: grid; grid-template-columns: 1fr auto 1fr; align-items: center; height: 32px; flex: none; background: linear-gradient(90deg, #201d24, #26222b 40%, #232735 65%, #2d221d 85%, #38201b); color: #fff; font: 9px/10px "Noto Sans", sans-serif; }
.apps { grid-column: 2; display: flex; gap: 3px; }
.apps button { position: relative; width: 26px; height: 27px; justify-content: center; border-radius: 3px; }
.apps .active { background: #3a3741; }
.run::after { content: ""; position: absolute; bottom: 0; left: 12px; width: 3px; height: 1px; background: #aaa; }
.run.active::after { left: 8px; width: 10px; height: 2px; background: #5cc0f0; border-radius: 1px; }
.tray { grid-column: 3; justify-self: end; display: flex; align-items: center; gap: 5px; padding-right: 13px; font-size: 8px; }
.lang { padding: 0 6px; }
.tray time { text-align: right; padding-left: 2px; }
```
